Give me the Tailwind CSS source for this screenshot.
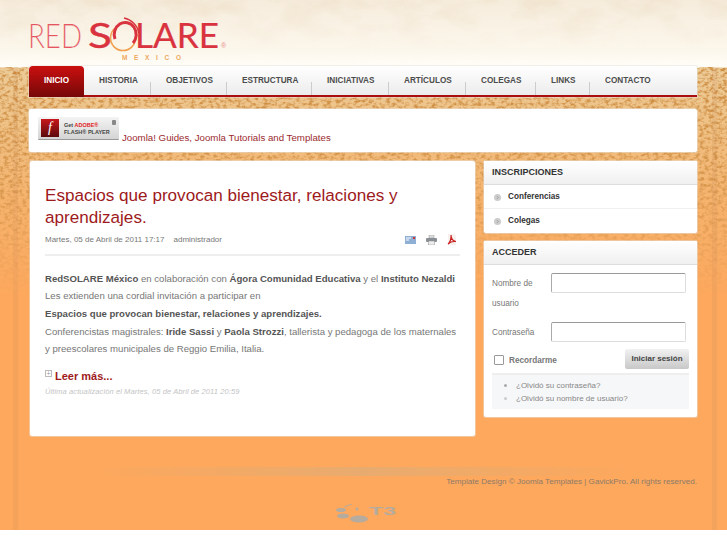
<!DOCTYPE html>
<html lang="es">
<head>
    <meta charset="UTF-8">
    <meta name="viewport" content="width=device-width, initial-scale=1.0">
    <title>RedSOLARE México</title>
    <script src="https://cdn.jsdelivr.net/npm/@tailwindcss/browser@4"></script>
</head>
<body class="bg-white font-['Liberation_Sans',Arial,sans-serif] text-[#666]">
    <div class="relative h-[530px] overflow-hidden bg-[#fda85d]">
        <!-- Background texture -->
        <svg class="absolute left-0 top-0" width="727" height="530" aria-hidden="true">
            <defs>
                <filter id="sand" x="0" y="0" width="100%" height="100%" color-interpolation-filters="sRGB">
                    <feTurbulence type="fractalNoise" baseFrequency="0.22 0.32" numOctaves="3" seed="7"/>
                    <feColorMatrix values="0 0 0 0 0.80  0 0 0 0 0.54  0 0 0 0 0.24  0 0 0 3 -1.300"/>
                    <feGaussianBlur stdDeviation="0.5"/>
                </filter>
                <filter id="mottle" x="0" y="0" width="100%" height="100%" color-interpolation-filters="sRGB">
                    <feTurbulence type="fractalNoise" baseFrequency="0.025 0.05" numOctaves="4" seed="3"/>
                    <feColorMatrix values="0 0 0 0 0.90  0 0 0 0 0.82  0 0 0 0 0.68  0 0 0 1.600 -0.700"/>
                </filter>
                <filter id="tear" x="0" y="0" width="100%" height="100%" color-interpolation-filters="sRGB">
                    <feTurbulence type="fractalNoise" baseFrequency="0.07 0.5" numOctaves="2" seed="11"/>
                    <feColorMatrix values="0 0 0 0 1  0 0 0 0 0.99  0 0 0 0 0.96  0 0 0 6 -2.600"/>
                </filter>
                <linearGradient id="headBase" x1="0" y1="0" x2="0" y2="1">
                    <stop offset="0" stop-color="#f6ecdc"/>
                    <stop offset="0.75" stop-color="#fcf7ec"/>
                    <stop offset="1" stop-color="#fffdf8"/>
                </linearGradient>
                <linearGradient id="headMaskFill" x1="0" y1="0" x2="0" y2="1">
                    <stop offset="0" stop-color="#888"/>
                    <stop offset="0.8" stop-color="#000"/>
                </linearGradient>
                <linearGradient id="fadeBase" x1="0" y1="0" x2="0" y2="1">
                    <stop offset="0" stop-color="#eccb98"/>
                    <stop offset="0.25" stop-color="#efc185"/>
                    <stop offset="0.6" stop-color="#f6b26c"/>
                    <stop offset="1" stop-color="#fda85d"/>
                </linearGradient>
                <linearGradient id="fadeMask" x1="0" y1="0" x2="0" y2="1">
                    <stop offset="0" stop-color="#fff"/>
                    <stop offset="0.5" stop-color="#bbb"/>
                    <stop offset="1" stop-color="#000"/>
                </linearGradient>
                <mask id="sandMask"><rect y="67" width="727" height="230" fill="url(#fadeMask)"/></mask>
                <mask id="headMask"><rect width="727" height="67" fill="url(#headMaskFill)"/></mask>
            </defs>
            <rect width="727" height="67" fill="url(#headBase)"/>
            <rect width="727" height="67" filter="url(#mottle)" mask="url(#headMask)"/>
            <rect y="67" width="727" height="230" fill="url(#fadeBase)"/>
            <rect y="67" width="727" height="230" filter="url(#sand)" mask="url(#sandMask)"/>
            <rect y="60" width="727" height="8" filter="url(#tear)"/>
            <rect x="13" y="67" width="5" height="463" fill="#c88a58" opacity="0.14"/>
            <rect x="712" y="67" width="5" height="463" fill="#c88a58" opacity="0.16"/>
        </svg>

        <div class="relative pl-[29px] pr-[30px] w-[727px]">
            <!-- Header -->
            <header class="h-[67px] pt-[17px]">
                <svg width="200" height="46" viewBox="0 0 200 46" aria-label="RedSOLARE México">
                    <text x="-1" y="31" textLength="54" lengthAdjust="spacingAndGlyphs" font-family="Lato, sans-serif" font-weight="300" font-size="34" fill="#e4565f" stroke="#fdf8ee" stroke-width="0.2">RED</text>
                    <text x="59" y="31" textLength="24" lengthAdjust="spacingAndGlyphs" font-family="Lato, sans-serif" font-size="34" fill="#d9333f" stroke="#d9333f" stroke-width="0.4">S</text>
                    <circle cx="94" cy="21" r="12.5" fill="none" stroke="#f0a04f" stroke-width="1.6" stroke-dasharray="52 30"/>
                    <path d="M86 22 A11 12 0 1 1 104 26" fill="none" stroke="#d9333f" stroke-width="3"/>
                    <path d="M95 1 A19 19 0 0 1 110 16" fill="none" stroke="#d9333f" stroke-width="1.3"/>
                    <text x="106" y="31" textLength="84" lengthAdjust="spacingAndGlyphs" font-family="Lato, sans-serif" font-size="34" fill="#d9333f" stroke="#d9333f" stroke-width="0.2">LARE</text>
                    <text x="192" y="31" font-family="Liberation Sans, sans-serif" font-size="7" fill="#e98a8e">®</text>
                    <text x="93" y="43" textLength="59" font-family="Liberation Sans, sans-serif" font-weight="700" font-size="6.500" fill="#eda95f">MEXICO</text>
                </svg>
            </header>

            <!-- Main menu -->
            <nav class="flex h-[31px] -mt-px rounded-t-[3px] border-b-2 border-[#a90f10] bg-gradient-to-b from-white to-[#ececec] shadow-[0_0_0_1px_#e3e0da80] text-[8.200px] font-bold text-[#4c4c4c] leading-[29px]">
                <a href="#" class="w-[55px] h-[31px] rounded-t-[4px] bg-gradient-to-b from-[#cc0f0f] to-[#760808] text-white text-center">INICIO</a>
                <a href="#" class="relative w-[67px] pl-[15px] after:absolute after:right-0 after:bottom-0 after:h-[13px] after:w-px after:bg-[#ccc] after:content-['']">HISTORIA</a>
                <a href="#" class="relative w-[76px] pl-[15px] after:absolute after:right-0 after:bottom-0 after:h-[13px] after:w-px after:bg-[#ccc] after:content-['']">OBJETIVOS</a>
                <a href="#" class="relative w-[85px] pl-[15px] after:absolute after:right-0 after:bottom-0 after:h-[13px] after:w-px after:bg-[#ccc] after:content-['']">ESTRUCTURA</a>
                <a href="#" class="relative w-[77px] pl-[15px] after:absolute after:right-0 after:bottom-0 after:h-[13px] after:w-px after:bg-[#ccc] after:content-['']">INICIATIVAS</a>
                <a href="#" class="relative w-[77px] pl-[15px] after:absolute after:right-0 after:bottom-0 after:h-[13px] after:w-px after:bg-[#ccc] after:content-['']">ARTÍCULOS</a>
                <a href="#" class="relative w-[70px] pl-[15px] after:absolute after:right-0 after:bottom-0 after:h-[13px] after:w-px after:bg-[#ccc] after:content-['']">COLEGAS</a>
                <a href="#" class="relative w-[54px] pl-[15px] after:absolute after:right-0 after:bottom-0 after:h-[13px] after:w-px after:bg-[#ccc] after:content-['']">LINKS</a>
                <a href="#" class="pl-[15px]">CONTACTO</a>
            </nav>

            <!-- Flash banner -->
            <div class="flex items-start mt-[12px] h-[43px] pl-[9px] pt-[8px] bg-white rounded-[2px] shadow-[0_0_0_1px_#e8e2d880]">
                <div class="relative flex items-center w-[81px] h-[23px] pl-[3px] rounded-[1px] bg-gradient-to-b from-[#f4f4f4] to-[#d4d4d4] border-b border-[#999]">
                    <div class="flex items-center justify-center w-[18px] h-[18px] bg-gradient-to-b from-[#c8171c] to-[#5c0a0c] text-white text-[14px] leading-none italic font-['Liberation_Serif',serif]">f</div>
                    <div class="ml-[5px] mt-[2px] text-[5.500px] leading-[7px] font-bold text-[#444]">
                        <div>Get <span class="text-[#e01a22]">ADOBE®</span></div>
                        <div>FLASH® PLAYER</div>
                    </div>
                    <span class="absolute right-[3px] top-[3px] w-[4px] h-[5px] bg-[#888] rounded-[1px]"></span>
                </div>
                <a href="#" class="ml-[3px] mt-[15px] text-[9.700px] leading-[11px] text-[#9b2a2f]">Joomla! Guides, Joomla Tutorials and Templates</a>
            </div>

            <div class="flex items-start gap-[9px] mt-[9px]">
                <!-- Article -->
                <main class="w-[445px] ml-px h-[275px] px-[15px] pt-[24px] bg-white rounded-[2px] shadow-[0_0_0_1px_#e8e2d880]">
                    <h1 class="text-[17.100px] leading-[22px] text-[#9e1a1c]">Espacios que provocan bienestar, relaciones y aprendizajes.</h1>
                    <div class="flex items-center h-[17px] mt-[2px] text-[8px] text-[#777]">
                        <span>Martes, 05 de Abril de 2011 17:17</span>
                        <span class="ml-[9px]">administrador</span>
                        <span class="flex items-center gap-[10px] ml-auto mr-[3px]">
                            <svg width="11" height="8" viewBox="0 0 11 8"><rect width="11" height="8" fill="#8fb0d4"/><path d="M1 2h5M1 4h3" stroke="#fff"/><rect x="8" y="1" width="2" height="2" fill="#c33"/></svg>
                            <svg width="11" height="10" viewBox="0 0 11 10"><rect x="3" y="0" width="5" height="3" fill="#ddd" stroke="#999" stroke-width=".5"/><rect y="3" width="11" height="4" rx="1" fill="#8a8f96"/><rect x="2.500" y="6" width="6" height="4" fill="#eee" stroke="#888" stroke-width=".5"/></svg>
                            <svg width="10" height="11" viewBox="0 0 10 11"><path d="M1 0h6l2 2v9H1z" fill="#f6f0ee"/><path d="M1 10c2-1 3.500-6 3-9 0 4 2 6 5 6.500-3-.3-6 .5-8 2.500z" fill="none" stroke="#c9201f" stroke-width="1.200"/></svg>
                        </span>
                    </div>
                    <div class="border-t-2 border-[#eee] mt-[6px]"></div>
                    <div class="mt-[13.500px] text-[9.600px] leading-[17.700px] text-[#777]">
                        <p><b class="text-[#555]">RedSOLARE México</b> en colaboración con <b class="text-[#555]">Ágora Comunidad Educativa</b> y el <b class="text-[#555]">Instituto Nezaldi</b></p>
                        <p>Les extienden una cordial invitación a participar en</p>
                        <p><b class="text-[#555]">Espacios que provocan bienestar, relaciones y aprendizajes.</b></p>
                        <p>Conferencistas magistrales: <b class="text-[#555]">Iride Sassi</b> y <b class="text-[#555]">Paola Strozzi</b>, tallerista y pedagoga de los maternales<br>y preescolares municipales de Reggio Emilia, Italia.</p>
                    </div>
                    <div class="flex items-start mt-[10.500px] h-[16px]">
                        <span class="flex items-center justify-center w-[7px] h-[7px] mt-px border border-[#bbb] text-[7px] leading-none text-[#999]">+</span>
                        <a href="#" class="ml-[3px] text-[11px] leading-[15px] font-bold text-[#9e1a1c]">Leer más...</a>
                    </div>
                    <p class="mt-[2px] text-[7.500px] leading-[10px] italic tracking-[0.1px] text-[#c4c4c4]">Última actualización el Martes, 05 de Abril de 2011 20:59</p>
                </main>

                <!-- Sidebar -->
                <aside class="w-[213px] flex flex-col gap-[8px]">
                    <section class="h-[72px] bg-white rounded-[2px] shadow-[0_0_0_1px_#e8e2d880]">
                        <h3 class="h-[24px] pl-[8px] leading-[22px] text-[9px] font-bold text-[#333] bg-gradient-to-b from-white to-[#f0f0f0] border-b border-[#ddd]">INSCRIPCIONES</h3>
                        <a href="#" class="flex items-center h-[24px] pl-[10px] pt-[1px] text-[8.200px] font-bold text-[#333] border-b border-[#f0f0f0]">
                            <svg width="7" height="7" viewBox="0 0 7 7"><circle cx="3.500" cy="3.500" r="3.500" fill="#ccc"/><path d="M2.800 2l1.500 1.500-1.500 1.500" fill="none" stroke="#999" stroke-width=".8"/></svg><span class="ml-[7px]">Conferencias</span>
                        </a>
                        <a href="#" class="flex items-center h-[23px] pl-[10px] pt-[1px] text-[8.200px] font-bold text-[#333]">
                            <svg width="7" height="7" viewBox="0 0 7 7"><circle cx="3.500" cy="3.500" r="3.500" fill="#ccc"/><path d="M2.800 2l1.500 1.500-1.500 1.500" fill="none" stroke="#999" stroke-width=".8"/></svg><span class="ml-[7px]">Colegas</span>
                        </a>
                    </section>

                    <section class="h-[176px] bg-white rounded-[2px] shadow-[0_0_0_1px_#e8e2d880] text-[8.200px] text-[#777]">
                        <h3 class="h-[24px] pl-[8px] leading-[22px] text-[9px] font-bold text-[#333] bg-gradient-to-b from-white to-[#f0f0f0] border-b border-[#ddd]">ACCEDER</h3>
                        <div class="flex mt-[8px] pl-[8px]">
                            <label class="w-[59px] pt-px leading-[20px]">Nombre de usuario</label>
                            <input type="text" class="w-[135px] h-[20px] bg-white rounded-[2px] border border-[#ddd] border-t-[#999] border-l-[#aaa]">
                        </div>
                        <div class="flex items-center mt-[8px] pl-[8px]">
                            <label class="w-[59px] pt-[2px]">Contraseña</label>
                            <input type="password" class="w-[135px] h-[20px] bg-white rounded-[2px] border border-[#ddd] border-t-[#999] border-l-[#aaa]">
                        </div>
                        <div class="flex items-start mt-[7px] pl-[10px] pr-[8px]">
                            <span class="mt-[6px] w-[10px] h-[10px] rounded-[1px] border border-[#999] bg-white"></span>
                            <span class="mt-[6px] ml-[5px] font-bold text-[#777]">Recordarme</span>
                            <button type="button" class="ml-auto w-[64px] h-[20px] rounded-[2px] bg-gradient-to-b from-[#f2f2f2] to-[#c8c8c8] text-[8px] font-bold text-[#444]">Iniciar sesión</button>
                        </div>
                        <ul class="mx-[8px] mt-[4px] h-[36px] pt-[4px] pl-[12px] bg-[#f6f7f8] border-t-2 border-[#eee] text-[8px] leading-[13px] text-[#888]">
                            <li class="flex items-center"><span class="w-[3px] h-[3px] rounded-full bg-[#aaa] mr-[9px]"></span>¿Olvidó su contraseña?</li>
                            <li class="flex items-center"><span class="w-[3px] h-[3px] rounded-full bg-[#ccc] mr-[9px]"></span>¿Olvidó su nombre de usuario?</li>
                        </ul>
                    </section>
                </aside>
            </div>

            <!-- Footer -->
            <footer class="relative mt-[30px] h-[60px]">
                <div class="absolute left-[70px] top-[1px] w-[530px] h-[9px] bg-gradient-to-r from-transparent via-[#e8ab6f] to-transparent"></div>
                <p class="absolute right-0 top-[10px] text-[8.100px] leading-[11px] text-[#8d7b68]">Template Design © Joomla Templates | GavickPro. All rights reserved.</p>
                <svg class="absolute left-[306px] top-[38px]" width="64" height="20" viewBox="0 0 64 20" aria-label="T3">
                    <ellipse cx="6" cy="6" rx="5" ry="2" fill="#b5ab9f"/>
                    <ellipse cx="8" cy="12" rx="6" ry="2.500" fill="#b5ab9f"/>
                    <ellipse cx="24" cy="15" rx="9" ry="3.500" fill="#b5ab9f"/>
                    <path d="M9 3 L17 0" stroke="#b5ab9f"/>
                    <circle cx="22" cy="5" r="1.500" fill="#b5ab9f"/>
                    <text x="34" y="11" textLength="27" lengthAdjust="spacingAndGlyphs" font-family="Liberation Sans, sans-serif" font-weight="700" font-size="11" fill="#b5ab9f">T3</text>
                </svg>
            </footer>
        </div>
    </div>
</body>
</html>
